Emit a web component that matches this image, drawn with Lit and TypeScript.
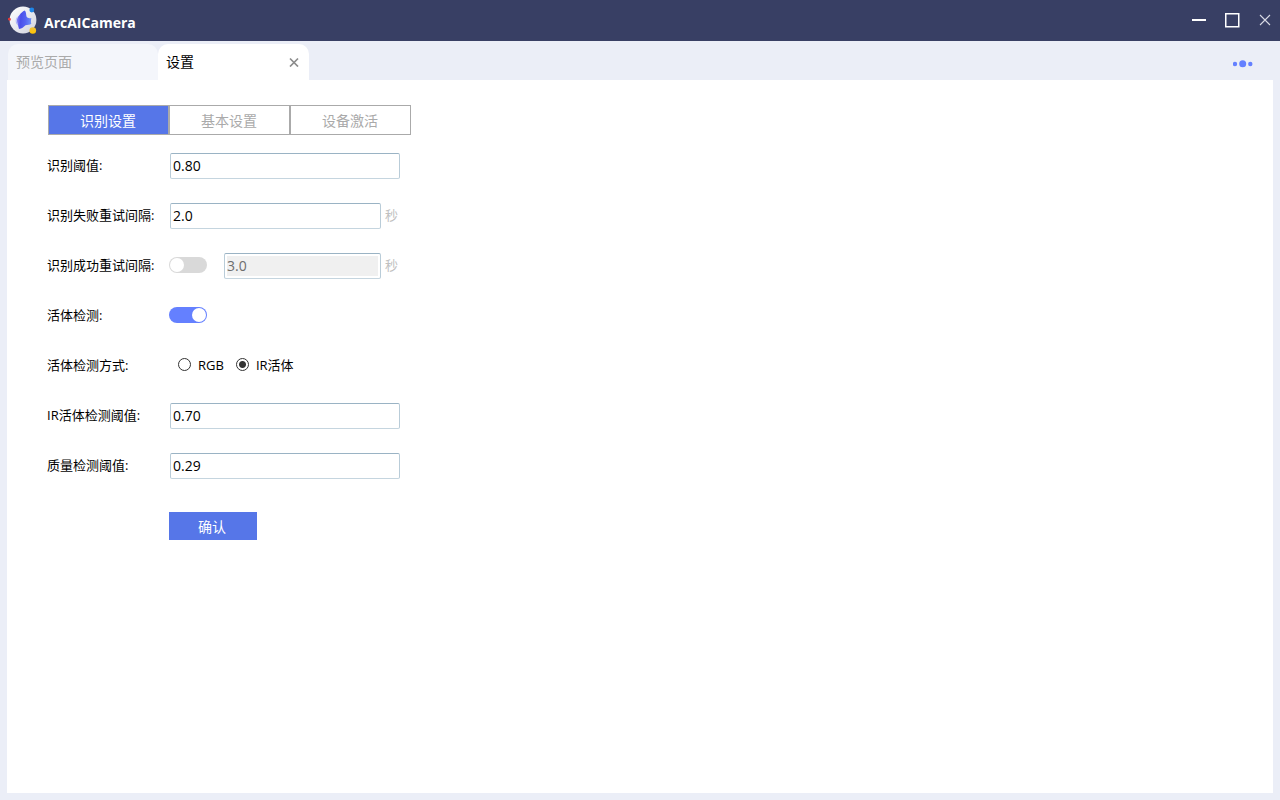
import { LitElement, html, css, svg } from "lit";
import { customElement, state } from "lit/decorators.js";

const logo = svg`
  <defs>
    <linearGradient id="orb" x1="0" y1="0" x2="1" y2="1">
      <stop offset="0" stop-color="#ffffff" />
      <stop offset="0.55" stop-color="#e6e7ee" />
      <stop offset="1" stop-color="#cfd0da" />
    </linearGradient>
    <linearGradient id="face" x1="0" y1="0" x2="1" y2="0.1">
      <stop offset="0" stop-color="#8f84f4" />
      <stop offset="0.3" stop-color="#4a4fea" />
      <stop offset="0.65" stop-color="#5563f2" />
      <stop offset="1" stop-color="#6a8cf8" />
    </linearGradient>
    <linearGradient id="sun" x1="0" y1="0" x2="0" y2="1">
      <stop offset="0" stop-color="#f0c038" />
      <stop offset="1" stop-color="#ffc400" />
    </linearGradient>
  </defs>
  <circle cx="15" cy="14" r="13.4" fill="url(#orb)" />
  <circle cx="1.4" cy="13.2" r="1.5" fill="#e23b3b" />
  <circle cx="23.8" cy="4" r="2.4" fill="#1f86e8" />
  <path d="M16.800 4.500C14.500 5.500 13 7 11.500 9C9.500 11 8.800 13 9 15C9.200 17.500 10.200 19.500 11 23C14 22.500 15.500 21 17.500 19.200C19.500 18.800 22 19 23.300 17.800C22.800 16 22.900 14 23.400 12C21.500 12.400 19.300 12.200 18.500 10.500C18 8.500 18.300 6 16.800 4.500Z" fill="url(#face)" />
  <path d="M10 10.500C8 12.500 8.400 17 10.500 19.500C8.800 19 7.500 16.800 7.700 14.500C7.900 12.800 8.800 11 10 10.500Z" fill="#a9b4fb" />
  <circle cx="24.800" cy="24.500" r="3.300" fill="url(#sun)" />
`;

@customElement("app-root")
export class AppRoot extends LitElement {
  static styles = css`
    :host {
      display: flex;
      flex-direction: column;
      box-sizing: border-box;
      min-height: 100vh;
      background: #ebeef7;
      color: #000;
      font-family: "Open Sans", "Noto Sans CJK SC", sans-serif;
      font-size: 13px;
      line-height: 20px;
    }
    button {
      margin: 0;
      padding: 0;
      border: 0;
      background: none;
      font: inherit;
      color: inherit;
    }
    svg {
      display: block;
    }
    .titlebar {
      display: flex;
      align-items: center;
      height: 41px;
      padding: 0 8px;
      background: #383f64;
      color: #fff;
    }
    .name {
      flex: 1;
      margin: 4px 0 0 6px;
      font-size: 14px;
      font-weight: 700;
    }
    .window {
      display: flex;
      gap: 16px;
      padding-bottom: 2px;
    }
    .tabs {
      display: flex;
      align-items: flex-end;
      height: 39px;
      padding: 0 8px;
    }
    .tab {
      display: flex;
      align-items: center;
      justify-content: space-between;
      box-sizing: border-box;
      width: 150px;
      height: 36px;
      padding: 0 8px 2px;
      border-radius: 10px 10px 0 0;
      background: #f4f6fb;
      color: #aaa;
      font-family: "Noto Sans CJK SC", sans-serif;
      font-size: 14px;
    }
    .tab.current {
      width: 151px;
      padding-right: 10px;
      background: #fff;
      color: #000;
    }
    .close {
      padding-top: 2px;
    }
    .more {
      margin: 0 19px 10px auto;
    }
    .page {
      flex: 1;
      margin: 0 7px 7px;
      padding: 25px 40px;
      background: #fff;
    }
    .segments {
      display: flex;
      margin: 0 0 18px 1px;
    }
    .segment {
      box-sizing: border-box;
      width: 121px;
      height: 30px;
      padding: 2px 1px 0 0;
      border: 1px solid #aaa;
      background: #fff;
      color: #aaa;
      font-size: 14px;
    }
    .segment.current {
      background: #5676e8;
      color: #fff;
    }
    .form {
      display: grid;
      gap: 24px;
      margin: 0;
    }
    .row {
      display: grid;
      grid-template-columns: 122px 1fr;
      align-items: center;
      height: 26px;
    }
    .caption {
      padding-bottom: 2px;
    }
    .controls {
      display: flex;
      align-items: center;
    }
    .field {
      box-sizing: border-box;
      width: 230px;
      height: 26px;
      margin: 0 0 0 1px;
      padding: 0 2px 2px;
      border: 1px solid #b9ccd8;
      border-top-color: #9ab3c4;
      border-bottom-color: #c5d5df;
      border-radius: 2px;
      background: #fff;
      color: #000;
      font: inherit;
      font-size: 14px;
      outline: none;
    }
    .field.medium {
      width: 211px;
    }
    .field.short {
      width: 157px;
      margin-left: 17px;
    }
    .field:disabled {
      background: #f0f0f0;
      box-shadow: inset 0 0 0 2px #fff;
      color: #6d6d6d;
    }
    .unit {
      padding: 0 0 2px 4px;
      color: #c0c0c0;
    }
    .switch {
      appearance: none;
      display: flex;
      box-sizing: border-box;
      width: 38px;
      height: 16px;
      margin: 0 0 2px;
      padding: 1px;
      border-radius: 8px;
      background: #d9d9d9;
    }
    .switch::before {
      content: "";
      width: 14px;
      height: 14px;
      border-radius: 50%;
      background: #fff;
    }
    .switch:checked {
      justify-content: flex-end;
      background: #6480ff;
    }
    .choices {
      display: flex;
      gap: 12px;
      padding: 0 0 2px 9px;
    }
    .choice {
      display: flex;
      align-items: center;
      gap: 7px;
    }
    .radio {
      appearance: none;
      box-sizing: border-box;
      width: 13px;
      height: 13px;
      margin: 0 0 1px;
      border: 1px solid #333;
      border-radius: 50%;
      background: #fff;
    }
    .radio:checked {
      background: radial-gradient(circle, #333 3px, #fff 4px);
    }
    .confirm {
      width: 88px;
      height: 28px;
      margin: 33px 0 0 122px;
      padding: 2px 2px 0 0;
      background: #5676e8;
      color: #fff;
      font-size: 14px;
    }
  `;

  @state() private section = 0;
  @state() private retry = false;
  @state() private live = true;
  @state() private mode = "IR活体";

  private textRow(id: string, caption: string, value: string, unit = "") {
    return html`<div class="row">
      <label class="caption" for=${id}>${caption}</label>
      <div class="controls">
        <input class="field ${unit ? "medium" : ""}" id=${id} type="text" .value=${value} />
        ${unit ? html`<span class="unit">${unit}</span>` : ""}
      </div>
    </div>`;
  }

  render() {
    return html`
      <header class="titlebar">
        <svg width="30" height="29" viewBox="0 0 30 29" aria-hidden="true">${logo}</svg>
        <span class="name">ArcAICamera</span>
        <div class="window">
          <button aria-label="最小化">
            <svg width="18" height="18" viewBox="0 0 18 18"><path d="M2 9H16" stroke="#fff" stroke-width="2" /></svg>
          </button>
          <button aria-label="最大化">
            <svg width="18" height="18" viewBox="0 0 18 18"><rect x="1.750" y="2.750" width="13" height="13" fill="none" stroke="#fff" stroke-width="1.500" /></svg>
          </button>
          <button aria-label="关闭">
            <svg width="14" height="18" viewBox="0 0 14 18"><path d="M2 4L12 14M12 4L2 14" stroke="#d8dae4" stroke-width="1.100" /></svg>
          </button>
        </div>
      </header>

      <nav class="tabs">
        <button class="tab">预览页面</button>
        <div class="tab current">
          <span>设置</span>
          <button class="close" aria-label="关闭标签">
            <svg width="10" height="10" viewBox="0 0 10 10"><path d="M1 1.500L9 9.500M9 1.500L1 9.500" stroke="#8c8c8c" stroke-width="1.700" /></svg>
          </button>
        </div>
        <button class="more" aria-label="更多">
          <svg width="20" height="12" viewBox="0 0 20 12" fill="#6480ff">
            <circle cx="2" cy="6" r="2.200" /><circle cx="9.700" cy="5.700" r="3.500" /><circle cx="17.300" cy="6" r="2.200" />
          </svg>
        </button>
      </nav>

      <main class="page">
        <div class="segments">
          ${["识别设置", "基本设置", "设备激活"].map(
            (name, i) => html`<button
              class="segment ${this.section === i ? "current" : ""}"
              @click=${() => (this.section = i)}
            >${name}</button>`
          )}
        </div>

        <form class="form" @submit=${(e: Event) => e.preventDefault()}>
          ${this.textRow("threshold", "识别阈值:", "0.80")}
          ${this.textRow("fail", "识别失败重试间隔:", "2.0", "秒")}
          <div class="row">
            <label class="caption" for="retry">识别成功重试间隔:</label>
            <div class="controls">
              <input class="switch" id="retry" type="checkbox" .checked=${this.retry}
                @change=${() => (this.retry = !this.retry)} />
              <input class="field short" type="text" aria-label="识别成功重试间隔" .value=${"3.0"} ?disabled=${!this.retry} />
              <span class="unit">秒</span>
            </div>
          </div>
          <div class="row">
            <label class="caption" for="live">活体检测:</label>
            <div class="controls">
              <input class="switch" id="live" type="checkbox" .checked=${this.live}
                @change=${() => (this.live = !this.live)} />
            </div>
          </div>
          <div class="row" role="radiogroup" aria-labelledby="mode">
            <span class="caption" id="mode">活体检测方式:</span>
            <div class="choices">
              ${["RGB", "IR活体"].map(
                (m) => html`<label class="choice">
                  <input class="radio" type="radio" name="mode" .checked=${this.mode === m}
                    @change=${() => (this.mode = m)} />${m}</label>`
              )}
            </div>
          </div>
          ${this.textRow("ir", "IR活体检测阈值:", "0.70")}
          ${this.textRow("quality", "质量检测阈值:", "0.29")}
        </form>
        <button class="confirm">确认</button>
      </main>
    `;
  }
}
